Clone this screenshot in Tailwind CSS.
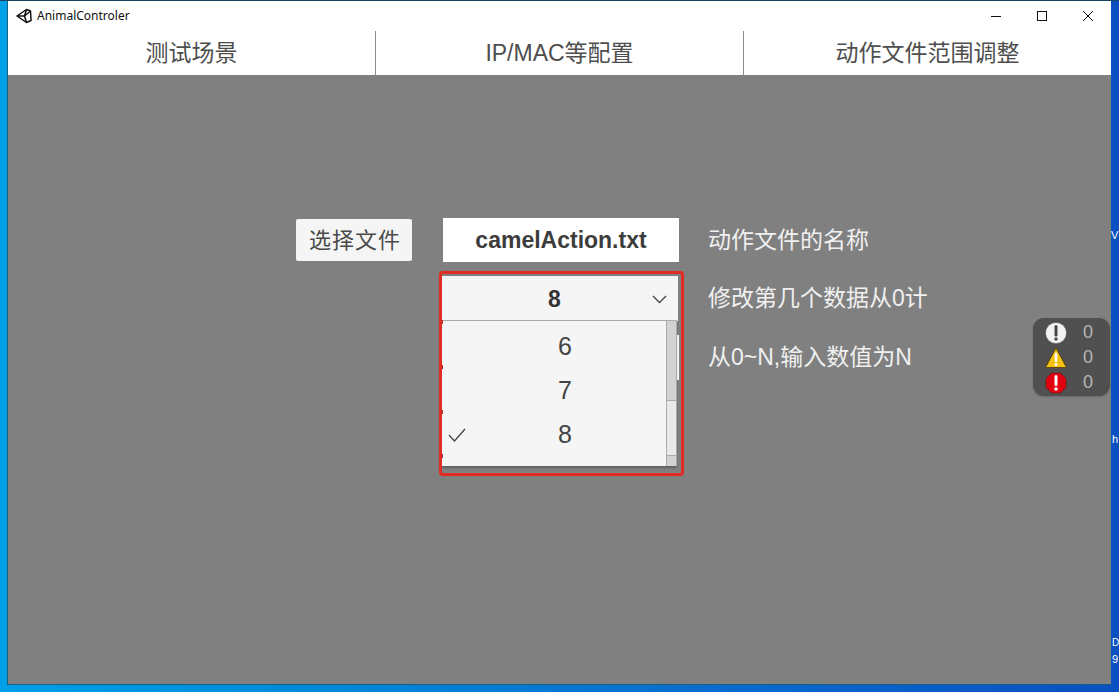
<!DOCTYPE html>
<html>
<head>
<meta charset="utf-8">
<script src="https://cdn.jsdelivr.net/npm/@tailwindcss/browser@4"></script>
</head>
<body class="m-0 overflow-hidden">
<div class="relative w-[1119px] h-[692px] overflow-hidden bg-[linear-gradient(90deg,#00a0e6_0%,#0090dc_20%,#0a6fd0_60%,#0a50c0_100%)] pt-px pl-[7px] font-['Liberation_Sans','Noto_Sans_CJK_SC',sans-serif]">
  <div class="absolute top-0 left-0 w-full h-px bg-[#17435f]"></div>
  <!-- desktop text fragments -->
  <span class="absolute left-[1111px] top-[228px] text-[11px] leading-[14px] text-white">V</span>
  <span class="absolute left-[1112px] top-[432px] text-[11px] leading-[14px] text-white">h</span>
  <span class="absolute left-[1112px] top-[636px] text-[10px] leading-[14px] text-white">D</span>
  <span class="absolute left-[1112px] top-[652px] text-[11px] leading-[14px] text-white">9</span>

  <div class="relative flex flex-col w-[1104px] h-[684px] border-b border-l border-[#155f85] box-border">
    <!-- title bar -->
    <div class="flex items-center h-[30px] bg-white shrink-0">
      <svg class="ml-[8px] w-[16px] h-[16px]" viewBox="0 0 16 16" fill="none" stroke="#111" stroke-width="1.5" stroke-linejoin="round"><path d="M1 8 L10.5 1.5 L14.5 3 L15 12.5 L10.5 14.5 Z"/><path d="M1 8 H8.5 L10.5 1.5 M8.5 8 L10.5 14.5 M8.5 8 L14.5 3"/></svg>
      <span class="ml-[5px] text-[12px] text-[#111] font-['Noto_Sans','Liberation_Sans',sans-serif]">AnimalControler</span>
      <div class="ml-auto flex items-center h-full">
        <svg class="w-[46px] h-[30px]" viewBox="0 0 46 30"><path d="M18 15.5 H28" stroke="#111" stroke-width="1"/></svg>
        <svg class="w-[46px] h-[30px]" viewBox="0 0 46 30"><rect x="18.5" y="10.5" width="9" height="9" fill="none" stroke="#111" stroke-width="1"/></svg>
        <svg class="w-[46px] h-[30px]" viewBox="0 0 46 30"><path d="M18 10 L28 20 M28 10 L18 20" stroke="#111" stroke-width="1"/></svg>
      </div>
    </div>
    <!-- tabs -->
    <div class="flex h-[44px] bg-white shrink-0 text-[23px] text-[#4e4e4e]">
      <div class="w-[368px] flex items-center justify-center border-r border-[#8a8a8a]">测试场景</div>
      <div class="w-[368px] flex items-center justify-center border-r border-[#8a8a8a]">IP/MAC等配置</div>
      <div class="flex-1 flex items-center justify-center">动作文件范围调整</div>
    </div>
    <!-- main -->
    <div class="relative flex-1 bg-[#808080] pl-[288px] pt-[143px]">
      <!-- row 1 -->
      <div class="flex items-center h-[44px]">
        <button class="w-[116px] h-[42px] bg-[#f5f5f5] rounded-[2px] text-[22px] tracking-[1px] text-[#4a4a4a] flex items-center justify-center pl-[2px]">选择文件</button>
        <div class="ml-[31px] w-[236px] h-[44px] bg-white flex items-center justify-center text-[23px] font-bold text-[#3c3c3c]">camelAction.txt</div>
        <span class="ml-[29px] text-[23px] text-[#f0f0f0]">动作文件的名称</span>
      </div>
      <!-- row 2 -->
      <div class="flex items-center mt-[14px] h-[45px] pl-[145px]">
        <div class="relative w-[237px] h-[45px] bg-[#f5f5f5] flex items-center justify-center pt-[2px]">
          <span class="text-[23px] font-bold text-[#333] -ml-[10px]">8</span>
          <svg class="absolute right-[11px] top-[19px] w-[15px] h-[9px]" viewBox="0 0 15 9" fill="none" stroke="#444" stroke-width="1.3"><path d="M1 1 L7.5 7.5 L14 1"/></svg>
        </div>
        <span class="ml-[30px] text-[23px] text-[#f0f0f0]">修改第几个数据从0计</span>
      </div>
      <!-- row 3 -->
      <div class="flex items-center mt-[14px] h-[45px] pl-[145px]">
        <div class="w-[237px] h-[45px] flex justify-end"><div class="w-[3px] h-[45px] bg-white mr-[-1px]"></div></div>
        <span class="ml-[30px] text-[23px] text-[#f0f0f0]">从0~N,输入数值为N</span>
      </div>

      <!-- dropdown list overlay -->
      <div class="absolute left-[434px] top-[245px] w-[235px] h-[146px] bg-[#f5f5f5] border-t border-[#aaa] flex shadow-[0_2px_2px_rgba(0,0,0,0.25)]">
        <div class="w-[224px] text-[25px] text-[#444] flex flex-col">
          <div class="relative h-[44px] mt-[4px] flex items-center justify-center pl-[22px]">6</div>
          <div class="relative h-[44px] flex items-center justify-center pl-[22px]">7</div>
          <div class="relative h-[44px] flex items-center justify-center pl-[22px]">
            <svg class="absolute left-[6px] top-[15px] w-[18px] h-[14px]" viewBox="0 0 18 14" fill="none" stroke="#444" stroke-width="1.3"><path d="M1 7 L6.5 13 L17 1"/></svg>
            8
          </div>
        </div>
        <div class="w-[11px] h-full flex flex-col bg-[#e9e9e9] border-x border-[#aaa]">
          <div class="h-[80px] bg-[#d2d2d2] border-b border-[#aaa]"></div>
          <div class="flex-1"></div>
          <div class="h-[11px] bg-[#d2d2d2] border-t border-[#aaa]"></div>
        </div>
      </div>
      <!-- annotation -->
      <div class="absolute left-[431px] top-[196px] w-[245px] h-[205px] border-[3px] border-[#df2c24] rounded-[4px] shadow-[0_0_1px_#df2c24]">
        <span class="absolute left-0 top-[46px] w-px h-[4px] bg-[#b03030]"></span>
        <span class="absolute left-0 top-[91px] w-px h-[4px] bg-[#b03030]"></span>
        <span class="absolute left-0 top-[136px] w-px h-[4px] bg-[#b03030]"></span>
        <span class="absolute left-0 top-[180px] w-px h-[4px] bg-[#b03030]"></span>
      </div>

      <!-- console stats -->
      <div class="absolute left-[1025px] top-[243px] w-[77px] h-[78px] rounded-[11px] bg-[#505050] flex flex-col pt-[2px] text-[18px] text-[#b8b8b8] shadow-[0_1px_2px_rgba(0,0,0,0.2)]">
        <div class="flex items-center h-[25px]">
          <svg class="ml-[12px] w-[22px] h-[22px] shrink-0" viewBox="0 0 22 22"><circle cx="11" cy="11" r="10.5" fill="#f2f2f2" stroke="#555" stroke-width="0.5"/><path d="M11 4.5 V13" stroke="#444" stroke-width="3" stroke-linecap="round"/><circle cx="11" cy="17" r="1.7" fill="#444"/></svg>
          <span class="ml-[16px]">0</span>
        </div>
        <div class="flex items-center h-[25px]">
          <svg class="ml-[12px] w-[22px] h-[21px] shrink-0" viewBox="0 0 22 21"><path d="M11 1 L21.5 20.5 H0.5 Z" fill="#f5c010" stroke="#4a3a00" stroke-width="0.8"/><path d="M11 7 V14" stroke="#fff" stroke-width="2.6" stroke-linecap="round"/><circle cx="11" cy="17.5" r="1.5" fill="#fff"/></svg>
          <span class="ml-[16px]">0</span>
        </div>
        <div class="flex items-center h-[25px]">
          <svg class="ml-[12px] w-[22px] h-[22px] shrink-0" viewBox="0 0 22 22"><path d="M6.5 1 H15.5 L21 6.5 V15.5 L15.5 21 H6.5 L1 15.5 V6.5 Z" fill="#e00010" stroke="#701010" stroke-width="0.7"/><path d="M11 4.5 V12.5" stroke="#fff" stroke-width="3" stroke-linecap="round"/><circle cx="11" cy="17" r="1.8" fill="#fff"/></svg>
          <span class="ml-[16px]">0</span>
        </div>
      </div>
    </div>
  </div>
</div>
</body>
</html>
